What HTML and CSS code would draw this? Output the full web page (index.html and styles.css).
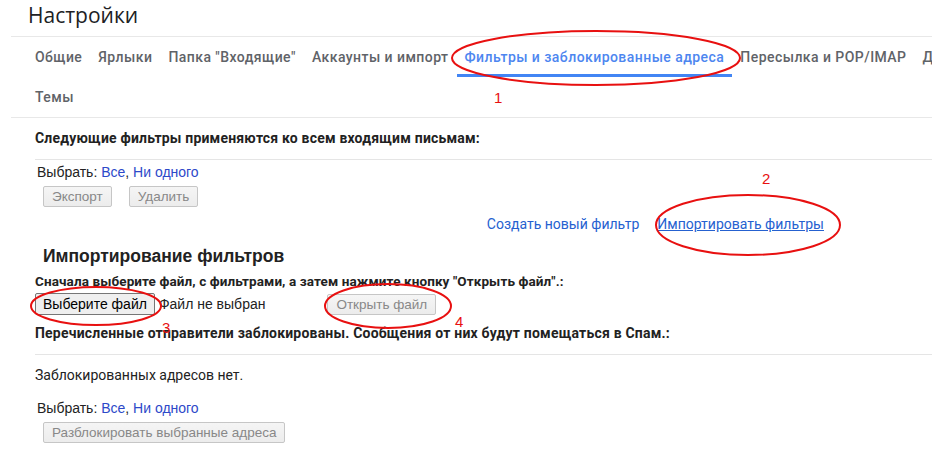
FILE: index.html
```html
<!DOCTYPE html>
<html lang="ru">
<head>
    <meta charset="UTF-8">
    <title>Настройки</title>
    <link rel="stylesheet" href="styles.css">
</head>
<body>
<div class="page">
    <div class="header">
        <h1>Настройки</h1>
    </div>

    <div class="tabs">
        <div class="tabs-row">
            <span class="tab">Общие</span>
            <span class="tab">Ярлыки</span>
            <span class="tab">Папка "Входящие"</span>
            <span class="tab">Аккаунты и импорт</span>
            <span class="tab active">Фильтры и заблокированные адреса</span>
            <span class="tab">Пересылка и POP/IMAP</span>
            <span class="tab">Дополнения</span>
        </div>
        <div class="tabs-row">
            <span class="tab">Темы</span>
        </div>
    </div>

    <div class="content">
        <div class="section-title">Следующие фильтры применяются ко всем входящим письмам:</div>
        <div class="select-row">Выбрать: <a class="sel">Все</a>, <a class="sel">Ни одного</a></div>
        <div class="btn-row">
            <button class="btn" disabled>Экспорт</button>
            <button class="btn" disabled>Удалить</button>
        </div>
        <div class="links-row">
            <a class="link">Создать новый фильтр</a>
            <a class="link underline">Импортировать фильтры</a>
        </div>

        <h2>Импортирование фильтров</h2>
        <div class="desc">Сначала выберите файл, с фильтрами, а затем нажмите кнопку "Открыть файл".:</div>
        <div class="file-row">
            <button class="file-btn">Выберите файл</button>
            <span class="file-name">Файл не выбран</span>
            <button class="btn open-btn" disabled>Открыть файл</button>
        </div>

        <div class="section-title">Перечисленные отправители заблокированы. Сообщения от них будут помещаться в Спам.:</div>
        <div class="empty">Заблокированных адресов нет.</div>
        <div class="select-row second">Выбрать: <a class="sel">Все</a>, <a class="sel">Ни одного</a></div>
        <div class="btn-row">
            <button class="btn" disabled>Разблокировать выбранные адреса</button>
        </div>
    </div>

    <svg class="marks" width="932" height="476" viewBox="0 0 932 476">
        <ellipse cx="596" cy="58" rx="144" ry="27" />
        <text x="494" y="103">1</text>
        <ellipse cx="748" cy="225" rx="92" ry="30" />
        <text x="762" y="184">2</text>
        <ellipse cx="96" cy="306" rx="65" ry="19" />
        <text x="162" y="333">3</text>
        <ellipse cx="388" cy="306" rx="63" ry="22" />
        <text x="455" y="327">4</text>
    </svg>
</div>
</body>
</html>
```

FILE: styles.css
```css
body {
    margin: 0;
    font-family: "Liberation Sans", Arial, sans-serif;
    font-size: 14px;
    color: #222;
    overflow: hidden;
}

.page {
    position: relative;
    width: 932px;
    height: 476px;
}

.header {
    margin-left: 11px;
    height: 37px;
    border-bottom: 1px solid #e8e8e8;
    box-sizing: border-box;
}

h1 {
    margin: 0;
    padding: 1px 0 0 17px;
    font-family: "Open Sans", Roboto, sans-serif;
    font-weight: 400;
    font-size: 21px;
    line-height: 28px;
    color: #202124;
}

.tabs {
    margin-left: 11px;
    padding-left: 16px;
    border-bottom: 1px solid #e8e8e8;
}

.tabs-row {
    display: flex;
    white-space: nowrap;
}

.tab {
    padding: 0 8px;
    height: 40px;
    line-height: 40px;
    font-family: Roboto, sans-serif;
    font-weight: 500;
    font-size: 14px;
    letter-spacing: 0.45px;
    color: #5f6368;
    box-sizing: border-box;
}

.tab.active {
    color: #4d86f0;
    border-bottom: 3px solid #4285f4;
}

.content {
    margin-left: 35px;
}

.section-title {
    padding: 12px 0;
    line-height: 17px;
    font-family: Roboto, sans-serif;
    font-weight: 700;
    font-size: 14px;
    letter-spacing: 0.2px;
    color: #222;
    border-bottom: 1px solid #e5e5e5;
    white-space: nowrap;
}

.select-row {
    margin-top: 4px;
    padding-left: 2px;
    line-height: 16px;
    color: #222;
}

.select-row.second {
    margin-top: 16px;
}

.sel {
    color: #2d49c9;
}

.btn-row {
    display: flex;
    gap: 17px;
    margin-top: 6px;
    padding-left: 8px;
}

.btn {
    height: 21px;
    padding: 0 8px;
    font-family: "Liberation Sans", Arial, sans-serif;
    font-size: 13.5px;
    color: #888;
    background: linear-gradient(#f5f5f5, #ececec);
    border: 1px solid #c6c6c6;
    border-radius: 2px;
}

.links-row {
    display: flex;
    justify-content: flex-end;
    gap: 18px;
    margin-top: 9px;
    padding-right: 108px;
    line-height: 16px;
    font-family: Roboto, sans-serif;
    font-size: 14px;
}

.link {
    color: #2561d0;
}

.underline {
    text-decoration: underline;
}

h2 {
    margin: 13px 0 0 8px;
    font-family: "Liberation Sans", Arial, sans-serif;
    font-size: 17.5px;
    line-height: 22px;
    color: #222;
}

.desc {
    margin-top: 6px;
    line-height: 17px;
    font-family: Roboto, sans-serif;
    font-weight: 700;
    font-size: 13.5px;
    letter-spacing: 0.1px;
    white-space: nowrap;
}

.file-row {
    display: flex;
    align-items: center;
    margin-top: 3px;
    height: 22px;
}

.file-btn {
    height: 22px;
    padding: 0 7px;
    font-family: "Liberation Sans", Arial, sans-serif;
    font-size: 14px;
    color: #000;
    background: #efefef;
    border: 1px solid #767676;
    border-radius: 2px;
}

.file-name {
    margin-left: 4px;
    font-size: 14px;
    color: #222;
}

.open-btn {
    margin-left: 62px;
    height: 21px;
}

.file-row + .section-title {
    padding-top: 10px;
}

.empty {
    margin-top: 12px;
    line-height: 17px;
    font-family: Roboto, sans-serif;
    font-size: 14px;
    color: #222;
}

.marks {
    position: absolute;
    left: 0;
    top: 0;
    pointer-events: none;
}

.marks ellipse {
    fill: none;
    stroke: #e81010;
    stroke-width: 2;
}

.marks text {
    font-family: "Liberation Sans", Arial, sans-serif;
    font-size: 15px;
    fill: #e81010;
}
```
